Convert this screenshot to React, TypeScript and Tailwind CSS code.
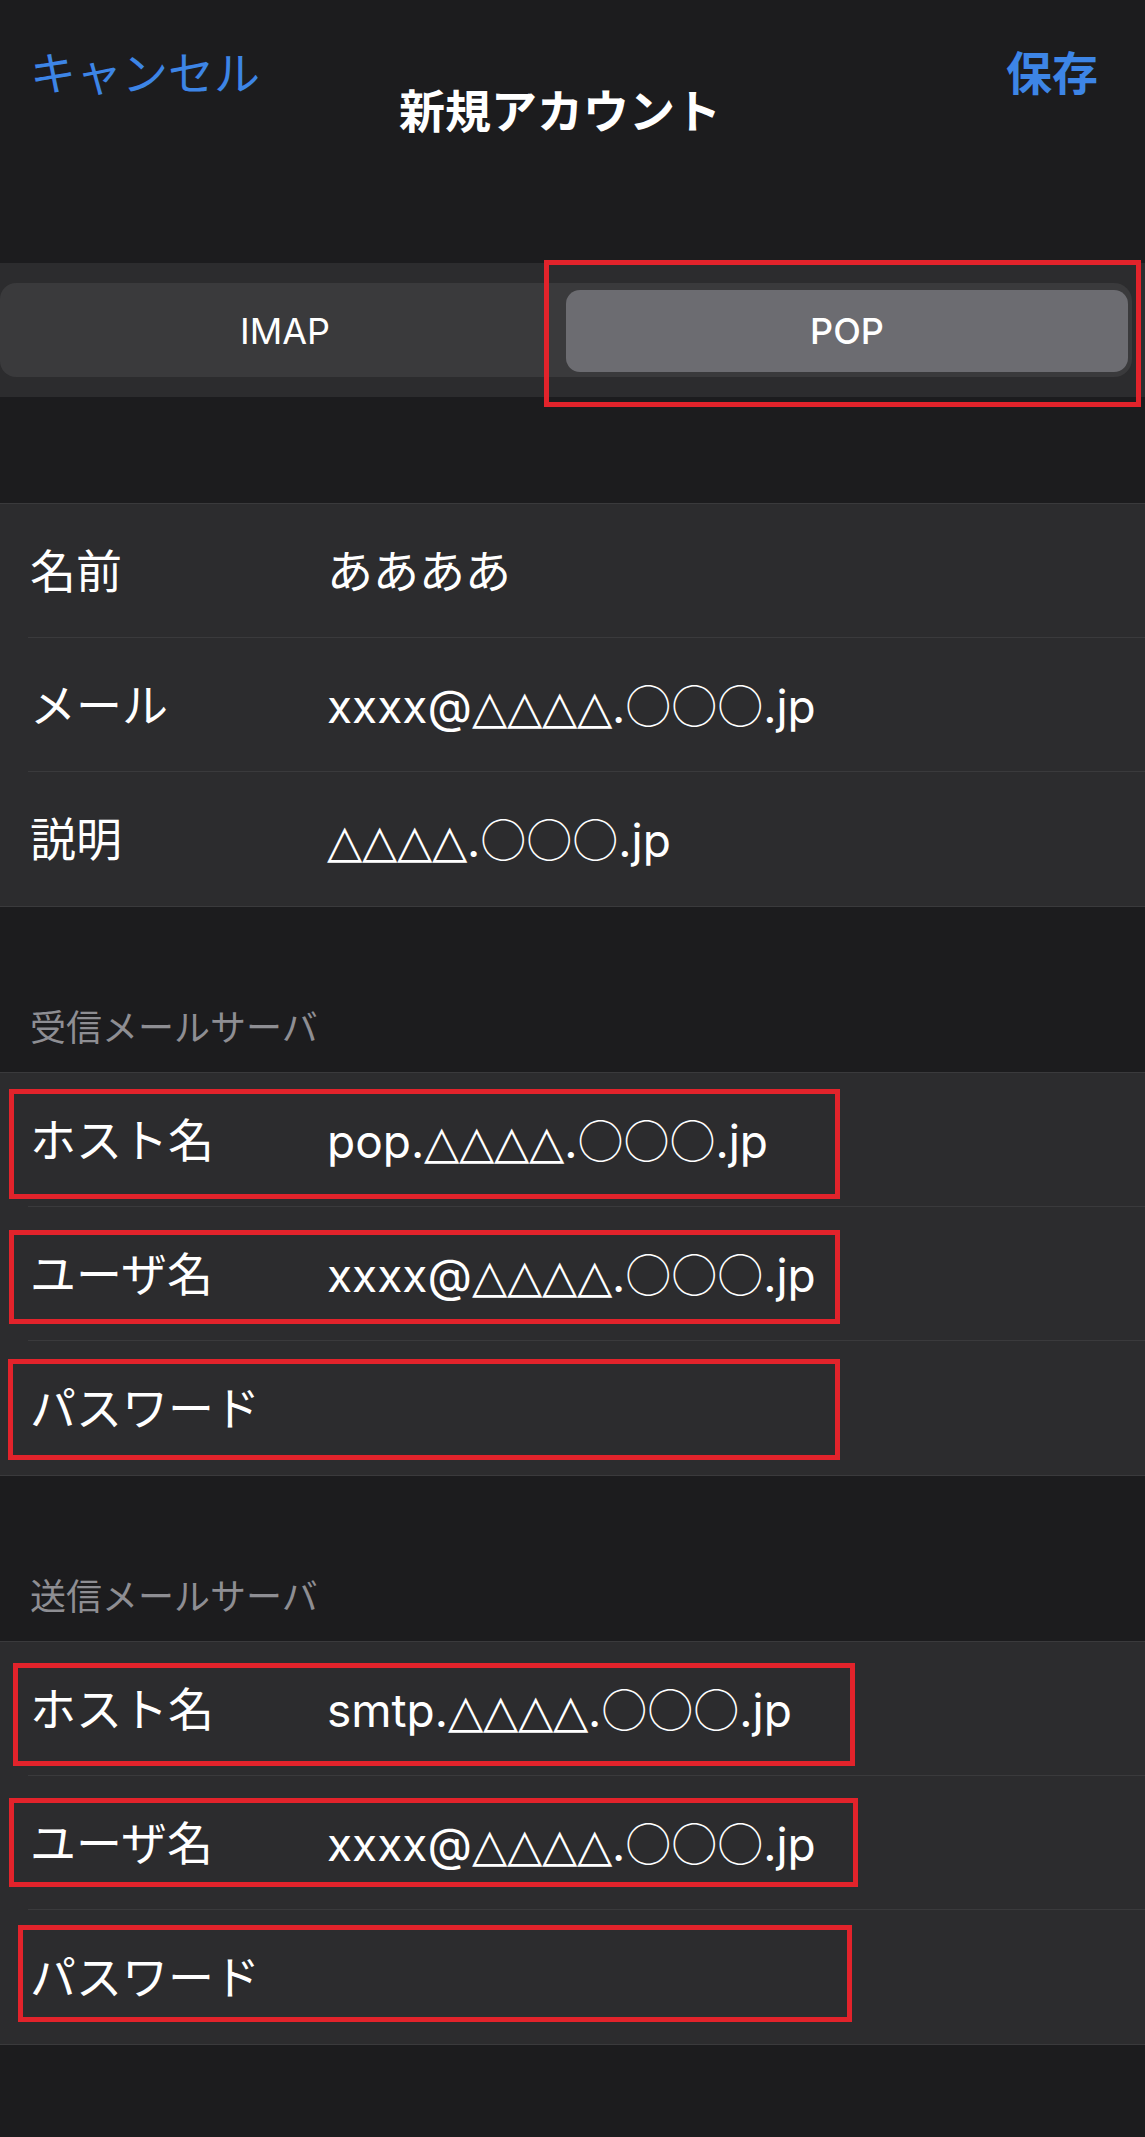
import React from 'react';

interface Box {
  top: number;
  left: number;
  width: number;
  height: number;
}

interface RowData {
  label: string;
  value?: string;
  box?: Box;
}

// red annotation frame drawn over a row
function RedBox({ box }: { box: Box }) {
  return (
    <div
      className="absolute border-[5px] border-[#e2232b] pointer-events-none"
      style={{ top: box.top, left: box.left, width: box.width, height: box.height }}
    />
  );
}

// △ reads narrower in DejaVu, ○ needs the full-width CJK circle
function Value({ text }: { text: string }) {
  const parts = text.split(/(△+|○+)/).filter(Boolean);
  return (
    <span className="text-[46px] leading-none text-white whitespace-nowrap">
      {parts.map((p, i) => {
        if (p[0] === '△') {
          return <span key={i} className="font-['DejaVu_Sans'] font-light">{p}</span>;
        }
        if (p[0] === '○') {
          return <span key={i} className="font-['Noto_Sans_CJK_JP'] font-light">{p}</span>;
        }
        return <span key={i}>{p}</span>;
      })}
    </span>
  );
}

function Group({ rows }: { rows: RowData[] }) {
  return (
    <div className="bg-[#2c2c2e] border-y border-[#3a3a3c]">
      {rows.map((row, i) => (
        <div key={i} className="relative pl-[28px]">
          <div
            className={`grid grid-cols-[299px_1fr] items-center h-[134px] ${
              i < rows.length - 1 ? 'border-b border-[#3a3a3c]' : ''
            }`}
          >
            <span className="pl-[2px] text-[46px] leading-none text-white">{row.label}</span>
            {row.value ? <Value text={row.value} /> : <span />}
          </div>
          {row.box && <RedBox box={row.box} />}
        </div>
      ))}
    </div>
  );
}

function SectionHeader({ title }: { title: string }) {
  return (
    <div className="h-[165px] flex items-end pb-[26px] pl-[30px]">
      <span className="text-[36px] leading-none text-[#8e8e93]">{title}</span>
    </div>
  );
}

export default function App() {
  const accountRows: RowData[] = [
    { label: '名前', value: 'ああああ' },
    { label: 'メール', value: 'xxxx@△△△△.○○○.jp' },
    { label: '説明', value: '△△△△.○○○.jp' }
  ];

  const incomingRows: RowData[] = [
    { label: 'ホスト名', value: 'pop.△△△△.○○○.jp', box: { top: 16, left: 9, width: 831, height: 110 } },
    { label: 'ユーザ名', value: 'xxxx@△△△△.○○○.jp', box: { top: 23, left: 9, width: 831, height: 94 } },
    { label: 'パスワード', box: { top: 18, left: 8, width: 832, height: 101 } }
  ];

  const outgoingRows: RowData[] = [
    { label: 'ホスト名', value: 'smtp.△△△△.○○○.jp', box: { top: 21, left: 13, width: 842, height: 103 } },
    { label: 'ユーザ名', value: 'xxxx@△△△△.○○○.jp', box: { top: 22, left: 9, width: 849, height: 89 } },
    { label: 'パスワード', box: { top: 15, left: 18, width: 834, height: 97 } }
  ];

  return (
    <div className="min-h-[2137px] w-[1145px] bg-[#1c1c1e] font-['Inter','DejaVu_Sans','Noto_Sans_CJK_JP',sans-serif] overflow-hidden">
      {/* Navigation bar */}
      <div className="h-[263px] grid grid-cols-[1fr_auto_1fr] items-start pl-[30px] pr-[47px] pt-[50px]">
        <button className="justify-self-start text-[46px] leading-none text-[#3d85e6]">キャンセル</button>
        <h1 className="mt-[38px] mr-[8px] text-[46px] leading-none font-bold text-white">新規アカウント</h1>
        <button className="justify-self-end text-[46px] leading-none font-bold text-[#3d85e6]">保存</button>
      </div>

      {/* IMAP / POP switch */}
      <div className="relative h-[134px] bg-[#2c2c2e] pt-[20px]">
        <div className="w-[1132px] h-[94px] rounded-r-[18px] rounded-l-[16px] bg-[#3a3a3c] flex pl-[4px] pr-[4px] pt-[7px] pb-[5px]">
          <div className="flex-1 flex items-center justify-center text-[36px] font-normal text-white">IMAP</div>
          <div className="flex-1 flex items-center justify-center rounded-[14px] bg-[#6c6c71] text-[36px] font-medium text-white">
            POP
          </div>
        </div>
        <RedBox box={{ top: -3, left: 544, width: 597, height: 147 }} />
      </div>

      <div className="h-[106px]" />

      <Group rows={accountRows} />

      <SectionHeader title="受信メールサーバ" />
      <Group rows={incomingRows} />

      <SectionHeader title="送信メールサーバ" />
      <Group rows={outgoingRows} />
    </div>
  );
}
